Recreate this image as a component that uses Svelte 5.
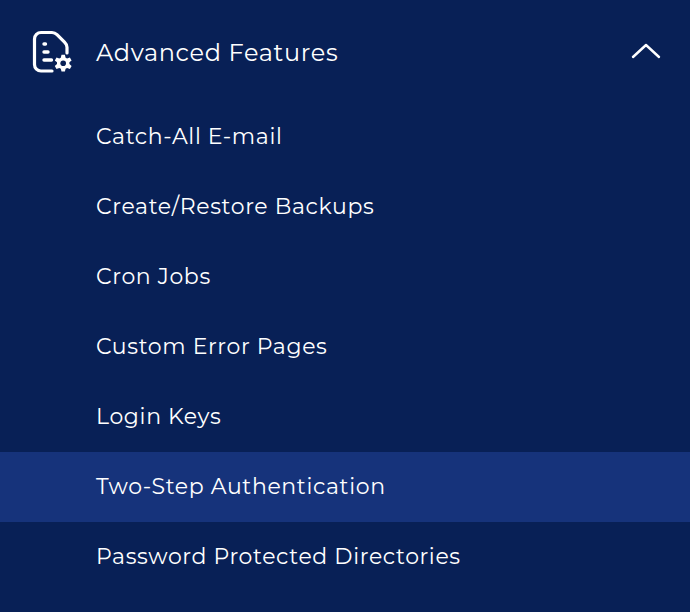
<script lang="ts">
    const links = [
        "Catch-All E-mail",
        "Create/Restore Backups",
        "Cron Jobs",
        "Custom Error Pages",
        "Login Keys",
        "Two-Step Authentication",
        "Password Protected Directories",
    ];
    const active = "Two-Step Authentication";
</script>

<nav class="menu">
    <header class="head">
        <svg class="icon" width="40" height="44" viewBox="0 0 40 44" fill="none" stroke="#fff" stroke-width="3.200" stroke-linecap="round" stroke-linejoin="round">
            <path d="M20 41H9a6.500 6.500 0 0 1-6.500-6.500V9A6.500 6.500 0 0 1 9 2.500h11c2 0 3.500.7 5 2.200l7.500 7.500c1.500 1.500 2.500 3 2.500 5V23" />
            <path d="M12 14h1.500M12 22h4M12 30h7.500" stroke-width="3.400" />
            <path d="M29.500 24.800h3.400l.7 2.900 1.500.8 2.800-1 1.700 2.900-2.200 1.900v1.800l2.200 1.900-1.700 2.900-2.800-1-1.500.8-.7 2.900h-3.400l-.7-2.900-1.500-.8-2.800 1-1.700-2.900 2.200-1.900v-1.800l-2.200-1.900 1.700-2.900 2.800 1 1.500-.8z" fill="#fff" stroke="none" />
            <circle cx="31.200" cy="33.300" r="2.800" fill="#082056" stroke="none" />
        </svg>
        <span class="title">Advanced Features</span>
        <svg class="chev" width="30" height="18" viewBox="0 0 30 18" fill="none" stroke="#fff" stroke-width="2.400" stroke-linecap="round" stroke-linejoin="round">
            <path d="M2 15L15 3l13 12" />
        </svg>
    </header>
    <ul>
        {#each links as link}
            <li class:active={link === active}>{link}</li>
        {/each}
    </ul>
</nav>

<style>
    :global(body) {
        background: #082056;
    }
    .menu {
        height: 612px;
        overflow: hidden;
        background: #082056;
        color: #fff;
        font-family: Montserrat, Inter, "Open Sans", sans-serif;
        font-size: 22px;
        letter-spacing: 0.64px;
    }
    .head {
        display: flex;
        align-items: center;
        height: 102px;
        padding: 2px 29px 0 32px;
        box-sizing: border-box;
    }
    .icon {
        margin-right: 24px;
    }
    .title {
        flex: 1;
        font-size: 24px;
        letter-spacing: 0.66px;
    }
    .chev {
        margin-top: -3px;
    }
    ul {
        list-style: none;
        margin: 0;
        padding: 0;
    }
    li {
        height: 70px;
        line-height: 70px;
        padding-left: 96px;
    }
    li.active {
        background: #16337b;
    }
</style>
